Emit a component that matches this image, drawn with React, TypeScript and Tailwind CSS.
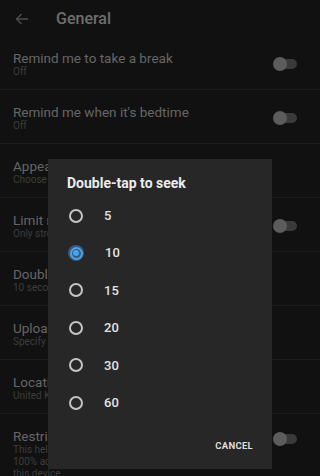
import { useState } from 'react';

interface Setting {
  title: string;
  lines: string[];
  toggle?: boolean;
}

const settings: Setting[] = [
  { title: 'Remind me to take a break', lines: ['Off'], toggle: true },
  { title: "Remind me when it's bedtime", lines: ['Off'], toggle: true },
  { title: 'Appearance', lines: ['Choose your light or dark theme'] },
  { title: 'Limit mobile data usage', lines: ['Only stream HD video on Wi-Fi'], toggle: true },
  { title: 'Double-tap to seek', lines: ['10 seconds'] },
  { title: 'Uploads', lines: ['Specify network preferences'] },
  { title: 'Location', lines: ['United Kingdom'] },
  {
    title: 'Restricted Mode',
    lines: ['This helps hide potentially mature', '100% accurate. This setting only', 'this device.'],
    toggle: true,
  },
];

const options = [5, 10, 15, 20, 30, 60];

function Toggle() {
  return (
    <div className="relative w-[25px] h-[14px] shrink-0">
      <div className="absolute left-[6px] top-[2px] w-[18px] h-[10px] rounded-full bg-[#3a3a3a]" />
      <div className="absolute left-0 top-0 w-[14px] h-[14px] rounded-full bg-[#5c5c5c]" />
    </div>
  );
}

function Radio({ checked }: { checked: boolean }) {
  if (checked) {
    return (
      <div className="w-[16px] h-[16px] rounded-full bg-[#3b5a75] flex items-center justify-center shrink-0 -ml-px">
        <div className="w-[13px] h-[13px] rounded-full border-2 border-[#4aa3ef] flex items-center justify-center">
          <div className="w-[6px] h-[6px] rounded-full bg-[#4aa3ef]" />
        </div>
      </div>
    );
  }
  return <div className="w-[14px] h-[14px] rounded-full border-2 border-[#c4c4c4] shrink-0" />;
}

export default function App() {
  const [selected, setSelected] = useState(10);

  return (
    <div
      className="relative w-[320px] h-[476px] overflow-hidden bg-[#111111]"
      style={{ fontFamily: 'Roboto, "Liberation Sans", sans-serif' }}
    >
      {/* header */}
      <div className="h-[36px] flex items-center">
        <svg width="14" height="12" viewBox="0 0 14 12" className="ml-[15px] mt-[2px]">
          <path d="M13 6H1.5M6.5 1L1.5 6l5 5" fill="none" stroke="#4d4d4d" strokeWidth="1.4" />
        </svg>
        <span className="ml-[27px] mt-[2px] text-[16px] font-medium text-[#6e6e6e]">General</span>
      </div>

      {/* settings list */}
      <div>
        {settings.map((s, i) => (
          <div
            key={s.title}
            className={`flex items-start justify-between pl-[13px] pr-[22px] ${
              i === settings.length - 1 ? '' : 'h-[54px] border-b border-[#1b1b1b]'
            }`}
          >
            <div className="pt-[14px]">
              <div className="text-[13.5px] leading-[16px] text-[#666666] whitespace-nowrap">{s.title}</div>
              {s.lines.map((l) => (
                <div key={l} className="text-[10px] leading-[12px] text-[#3d3d3d] whitespace-nowrap">
                  {l}
                </div>
              ))}
            </div>
            {s.toggle && (
              <div className={i === settings.length - 1 ? 'pt-[18px]' : 'pt-[21px]'}>
                <Toggle />
              </div>
            )}
          </div>
        ))}
      </div>

      {/* dialog */}
      <div className="absolute left-[48px] top-[159px] w-[224px] h-[310px] bg-[#272727] flex flex-col">
        <div className="pt-[16px] pl-[19px] text-[14px] leading-[17px] font-bold text-[#ececec]">
          Double-tap to seek
        </div>
        <div className="mt-[5px]">
          {options.map((o) => (
            <div
              key={o}
              onClick={() => setSelected(o)}
              className="h-[37.4px] flex items-center pl-[21px] cursor-pointer"
            >
              <Radio checked={selected === o} />
              <span className="ml-[21px] text-[13px] font-medium text-[#e2e2e2]">{o}</span>
            </div>
          ))}
        </div>
        <div className="flex justify-end pr-[19px] mt-[18px]">
          <span className="text-[9.5px] font-bold tracking-[0.3px] text-[#dcdcdc]">CANCEL</span>
        </div>
      </div>
    </div>
  );
}
